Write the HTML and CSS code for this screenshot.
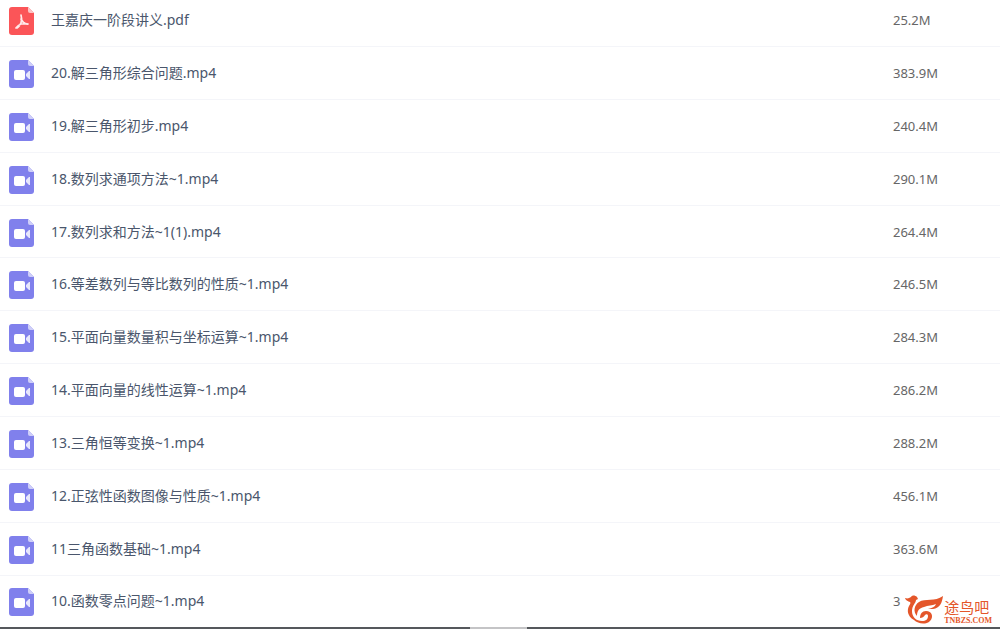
FILE: index.html
```html
<!DOCTYPE html>
<html lang="zh-CN">
<head>
  <meta charset="UTF-8">
  <meta name="viewport" content="width=device-width, initial-scale=1.0">
  <title>文件列表</title>
  <link rel="stylesheet" href="styles.css">
</head>
<body>
  <svg class="symbols" aria-hidden="true">
    <symbol id="pdf" viewBox="0 0 26 28">
      <path fill="#fb5558" d="M3 0h16l6 6v19a3 3 0 0 1-3 3H3a3 3 0 0 1-3-3V3a3 3 0 0 1 3-3z"/>
      <path fill="#fdc4c5" d="M19 0l6 6h-4a2 2 0 0 1-2-2z"/>
      <path fill="none" stroke="#ffe9e9" stroke-width="1.7" stroke-linecap="round" stroke-linejoin="round" d="M12 8c1 3 1 5 0 8-1 2-3 5-5 5 1-2 3-3 5-4 2 0 5-1 7 0-3 1-6-3-7-5"/>
    </symbol>
    <symbol id="video" viewBox="0 0 26 28">
      <path fill="#8080ec" d="M3 0h16l6 6v19a3 3 0 0 1-3 3H3a3 3 0 0 1-3-3V3a3 3 0 0 1 3-3z"/>
      <path fill="#cfcff9" d="M19 0l6 6h-4a2 2 0 0 1-2-2z"/>
      <rect fill="#fff" x="5" y="10" width="11" height="10" rx="2"/>
      <path fill="#e6e6fc" d="M17 14l3-3h1v8h-1l-3-3z"/>
    </symbol>
  </svg>

  <table class="files">
    <tbody>
      <tr><td class="icon"><svg><use href="#pdf"/></svg></td><td class="name">王嘉庆一阶段讲义.pdf</td><td class="size">25.2M</td></tr>
      <tr><td class="icon"><svg><use href="#video"/></svg></td><td class="name">20.解三角形综合问题.mp4</td><td class="size">383.9M</td></tr>
      <tr><td class="icon"><svg><use href="#video"/></svg></td><td class="name">19.解三角形初步.mp4</td><td class="size">240.4M</td></tr>
      <tr><td class="icon"><svg><use href="#video"/></svg></td><td class="name">18.数列求通项方法~1.mp4</td><td class="size">290.1M</td></tr>
      <tr><td class="icon"><svg><use href="#video"/></svg></td><td class="name">17.数列求和方法~1(1).mp4</td><td class="size">264.4M</td></tr>
      <tr><td class="icon"><svg><use href="#video"/></svg></td><td class="name">16.等差数列与等比数列的性质~1.mp4</td><td class="size">246.5M</td></tr>
      <tr><td class="icon"><svg><use href="#video"/></svg></td><td class="name">15.平面向量数量积与坐标运算~1.mp4</td><td class="size">284.3M</td></tr>
      <tr><td class="icon"><svg><use href="#video"/></svg></td><td class="name">14.平面向量的线性运算~1.mp4</td><td class="size">286.2M</td></tr>
      <tr><td class="icon"><svg><use href="#video"/></svg></td><td class="name">13.三角恒等变换~1.mp4</td><td class="size">288.2M</td></tr>
      <tr><td class="icon"><svg><use href="#video"/></svg></td><td class="name">12.正弦性函数图像与性质~1.mp4</td><td class="size">456.1M</td></tr>
      <tr><td class="icon"><svg><use href="#video"/></svg></td><td class="name">11三角函数基础~1.mp4</td><td class="size">363.6M</td></tr>
      <tr><td class="icon"><svg><use href="#video"/></svg></td><td class="name">10.函数零点问题~1.mp4</td><td class="size">3</td></tr>
    </tbody>
  </table>

  <div class="track"><div class="thumb"></div></div>

  <div class="brand">
    <svg class="bird" viewBox="0 0 40 30">
      <path fill="#e4562a" d="M1 3c3 1 4 0 6-1 1-2 4-2 6 0l1 2-2 1c0 3-4 5-4 11 0 6 4 10 10 10 4 0 6-2 6-5 0-2-2-2-3-1-1 2-3 3-5 3 0-4 2-7 6-7 6 0 8 6 4 10-4 4-12 3-16-1C3 21 3 15 5 11c1-2 2-3 1-4C4 6 2 6 1 3z"/>
      <path fill="#e4562a" d="M13 21c-4-4-3-11 2-14 6-4 16 0 24-6-1 7-3 12-10 13h-5c4-1 7-2 8-5-4 2-8 1-12 3-5 1-7 4-7 9z"/>
    </svg>
    <div class="brand-text">
      <span class="brand-name">途鸟吧</span>
      <span class="brand-url">TNBZS.COM</span>
    </div>
  </div>
</body>
</html>
```
FILE: styles.css
```css
* {
  margin: 0;
  padding: 0;
  box-sizing: border-box;
}
body {
  height: 100vh;
  overflow: hidden;
  background: #fff;
  font-family: "Noto Sans", "Noto Sans CJK SC", sans-serif;
  font-size: 14px;
  line-height: 20px;
}
.symbols {
  display: none;
}
.files {
  width: 100%;
  height: calc(100vh + 4px);
  margin-top: -6px;
  border-collapse: separate;
  border-spacing: 0;
}
.files td {
  border-bottom: 1px solid #f4f5f9;
  vertical-align: middle;
}
.files tr:last-child td {
  border-bottom: none;
}
.files .icon {
  width: 51px;
  padding: 2px 0 0 9px;
}
.icon svg {
  display: block;
  width: 26px;
  height: 28px;
}
.name {
  color: #4a566c;
}
.size {
  width: 107px;
  color: #666;
  font-size: 13px;
}
.track {
  height: 2px;
  background: #55585c;
}
.thumb {
  width: 57px;
  height: 2px;
  margin-left: 47%;
  background: #c4c4c6;
}
.brand {
  position: absolute;
  right: 8px;
  bottom: 4px;
  display: flex;
  align-items: flex-end;
  background: #fff;
  color: #e4562a;
}
.bird {
  width: 40px;
  height: 30px;
}
.brand-text {
  display: flex;
  flex-direction: column;
}
.brand-name {
  font-family: "Noto Sans CJK SC", sans-serif;
  font-size: 15px;
  line-height: 20px;
}
.brand-url {
  font-family: "Liberation Serif", serif;
  font-size: 8px;
  font-weight: bold;
  line-height: 8px;
}
```
